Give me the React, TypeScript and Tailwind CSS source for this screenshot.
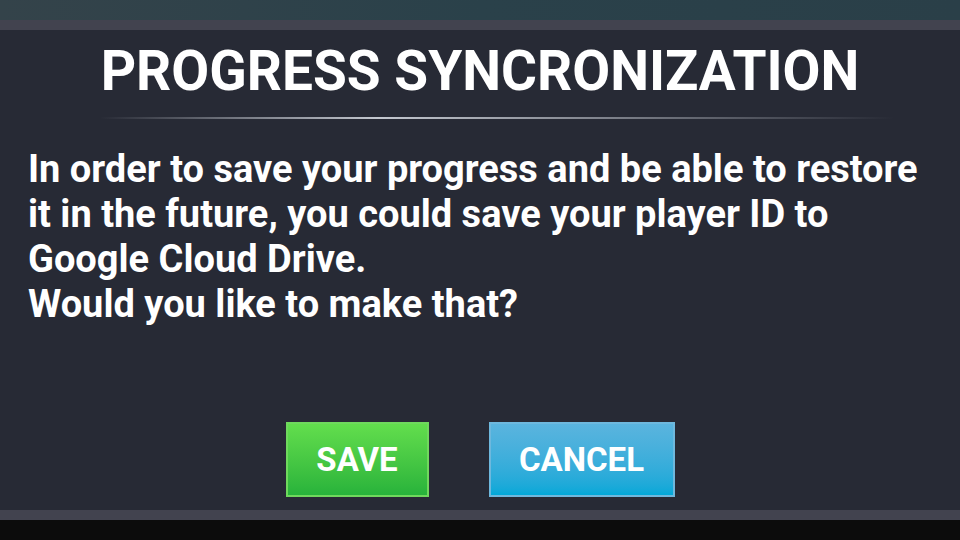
export default function App() {
  return (
    <div className="flex h-[540px] w-[960px] flex-col overflow-hidden bg-[#0c0c0c] font-['Roboto',sans-serif]">
      {/* backdrop strip */}
      <div className="h-[20px] bg-gradient-to-r from-[#34434a] via-[#2a414a] to-[#2a3f48]" />
      <div className="h-[10px] bg-[#42434f]" />

      {/* ── Dialog ─────────────────────────────────────────── */}
      <div className="flex h-[480px] flex-col bg-[#272a35]">
        <h1 className="pt-[14px] text-center text-[55px] font-bold leading-[55px] text-white">
          PROGRESS SYNCRONIZATION
        </h1>

        <div className="ml-[100px] mr-[66px] mt-[18px] h-[2px] bg-gradient-to-r from-transparent via-[#c4c8d0] via-35% to-transparent" />

        <p className="px-[28px] pt-[28px] text-[38px] font-bold leading-[45px] text-white">
          In order to save your progress and be able to restore
          <br />
          it in the future, you could save your player ID to
          <br />
          Google Cloud Drive.
          <br />
          Would you like to make that?
        </p>

        <div className="mt-auto mb-[13px] flex justify-center gap-[60px]">
          <button className="h-[75px] w-[143px] border-2 border-[#6fd95d] bg-gradient-to-b from-[#62de4d] to-[#27b33b] text-[33px] font-bold text-white">
            SAVE
          </button>
          <button className="h-[75px] w-[186px] border-2 border-[#6eb8dd] bg-gradient-to-b from-[#5ab4de] to-[#00a8d8] text-[33px] font-bold text-white">
            CANCEL
          </button>
        </div>
      </div>

      <div className="h-[10px] bg-[#42434f]" />
      <div className="flex-1 bg-[#0c0c0c]" />
    </div>
  );
}
